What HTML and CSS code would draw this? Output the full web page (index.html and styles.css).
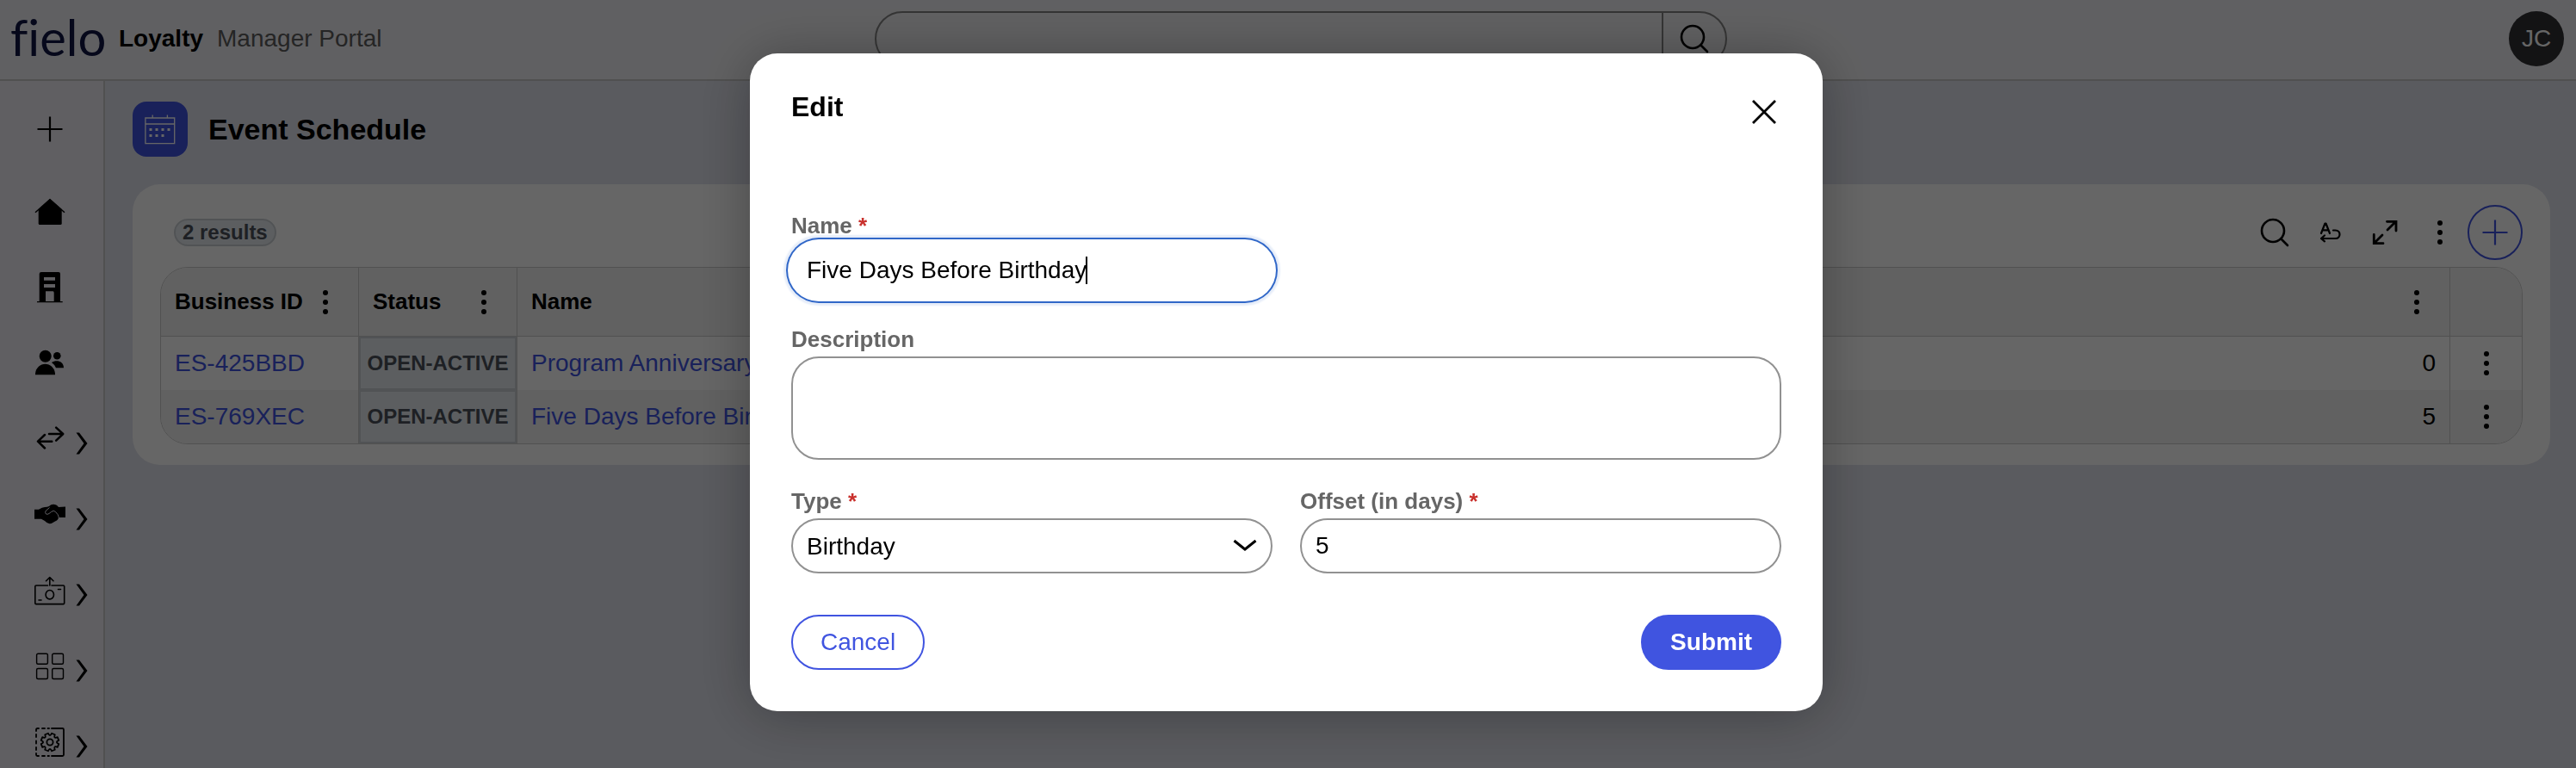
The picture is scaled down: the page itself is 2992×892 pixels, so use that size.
FILE: index.html
```html
<!DOCTYPE html>
<html lang="en">
<head>
<meta charset="utf-8">
<title>Event Schedule</title>
<link rel="stylesheet" href="styles.css">
</head>
<body>
<svg class="defs" aria-hidden="true">
  <symbol id="dots" viewBox="0 0 8 28"><circle cx="4" cy="3" r="3"/><circle cx="4" cy="14" r="3"/><circle cx="4" cy="25" r="3"/></symbol>
  <symbol id="chevron" viewBox="0 0 14 26"><path d="M.5 .5H4L13.500 13 4 25.500H.5L9.500 13Z"/></symbol>
  <symbol id="search" viewBox="0 0 36 36"><g fill="none" stroke="#000" stroke-width="2.600" stroke-linecap="round"><circle cx="16" cy="16" r="13"/><path d="M25.500 25.500l7.500 7.500"/></g></symbol>
  <symbol id="plus" viewBox="0 0 36 36"><path d="M18 3.500v29M3.500 18h29" fill="none" stroke="currentColor" stroke-width="2.200"/></symbol>
</svg>
<div class="app">
  <header class="topbar">
    <div class="brand">
      <span class="logo">fielo</span>
      <strong class="product">Loyalty</strong>
      <span class="portal">Manager Portal</span>
    </div>
    <form class="search">
      <input class="search-input" type="text" aria-label="Search">
      <button class="search-button" type="button" aria-label="Search"><svg class="icon"><use href="#search"/></svg></button>
    </form>
    <button class="avatar" type="button">JC</button>
  </header>
  <div class="body">
    <nav class="sidebar">
      <a class="nav-item nav-add" href="#" aria-label="New"><svg class="icon"><use href="#plus"/></svg></a>
      <a class="nav-item" href="#" aria-label="Home">
        <svg class="icon" viewBox="0 0 36 36"><path d="M18 3L31.700 15V31.500Q31.700 33 30.200 33H6.200Q4.700 33 4.700 31.500V15Z"/><path d="M1 18.700L18 3.700 35 18.700" fill="none" stroke="#000" stroke-width="1.500"/></svg>
      </a>
      <a class="nav-item" href="#" aria-label="Companies">
        <svg class="icon" viewBox="0 0 36 36"><path fill-rule="evenodd" d="M8 0H28Q30 0 30 2V34H32.700V35.300H3V34H5.700V2Q5.700 0 8 0ZM11 6V9.700H24V6ZM11 14V18H24V14ZM13 22.300V34H22.700V24Q22.700 22.300 21.500 22.300Z"/></svg>
      </a>
      <a class="nav-item" href="#" aria-label="Members">
        <svg class="icon" viewBox="0 0 36 36"><circle cx="12.700" cy="9.700" r="7"/><path d="M1 31.300V30C1.500 23 7 18.700 12.500 18.700S23.500 23 24 30V31.300Z"/><circle cx="26.300" cy="9.300" r="4.300"/><path d="M20 17C25 13.500 34 15 34 23.300H25Q23.500 19.500 20 17Z"/></svg>
      </a>
      <a class="nav-item" href="#" aria-label="Transactions">
        <svg class="icon" viewBox="0 0 36 36"><path fill="none" stroke="#000" stroke-width="2.500" stroke-linecap="round" stroke-linejoin="round" d="M17 12H33M25.200 4.700L33.200 12 25.200 19.700M20.300 20.700H4.500M12 13L4 20.700 12 28.500"/></svg>
        <svg class="chevron"><use href="#chevron"/></svg>
      </a>
      <a class="nav-item" href="#" aria-label="Partners">
        <svg class="icon" viewBox="0 0 36 36"><path d="M0 11.700H5Q9 9 12 9Q15 9 17 8Q19 5.700 22 5.700Q25.500 5.700 28 9L36 8.500V21H28Q27.500 24 24 25.500Q20 28.300 17.500 28.300Q15 28.300 12 25L8 22.700H0Z"/><path d="M17.500 9.500L13 13.500Q12 15.500 13.500 17Q15 17.800 17 16.500L19.500 14.500Q22.500 12 24.500 14.500L27 17.500Q28.300 19 28 21" fill="none" stroke="#efedf7" stroke-width="1"/></svg>
        <svg class="chevron"><use href="#chevron"/></svg>
      </a>
      <a class="nav-item" href="#" aria-label="Payouts">
        <svg class="icon" viewBox="0 0 36 36"><g fill="none" stroke="#000" stroke-width="1.600" stroke-linecap="round" stroke-linejoin="round"><path d="M15.500 12H2Q.8 12 .8 13V32.500Q.8 33.600 2 33.600H33.500Q34.700 33.600 34.700 32.500V13Q34.700 12 33.500 12H20M17.800 12V2.700M13.500 6.700L17.800 2.500 22 6.700M27.500 16.500H30.500M5 29H8"/><ellipse cx="17.800" cy="22.700" rx="4.700" ry="5.200"/></g></svg>
        <svg class="chevron"><use href="#chevron"/></svg>
      </a>
      <a class="nav-item" href="#" aria-label="Catalog">
        <svg class="icon" viewBox="0 0 36 36"><g fill="none" stroke="#000" stroke-width="1.400"><rect x="2.600" y="3.300" width="12.800" height="12" rx="1.500"/><rect x="20.700" y="3.300" width="12.800" height="12" rx="1.500"/><rect x="2.600" y="20.500" width="12.800" height="12" rx="1.500"/><rect x="20.700" y="20.500" width="12.800" height="12" rx="1.500"/></g></svg>
        <svg class="chevron"><use href="#chevron"/></svg>
      </a>
      <a class="nav-item" href="#" aria-label="Settings">
        <svg class="icon" viewBox="0 0 36 36"><g fill="none" stroke="#000" stroke-width="1.800" stroke-linecap="round" stroke-linejoin="round"><path d="M20 2H32.500Q34 2 34 3.500V32.500Q34 34 32.500 34H20M15.500 2H17M9 2H12M5 2H3.500Q2 2 2 3.500V5M2 9V12M2 16.500V19.500M2 24V27M2 31V32.500Q2 34 3.500 34H5M9 34H12M15.500 34H17"/><circle cx="18" cy="18" r="3.600"/><path transform="translate(18 18) rotate(22.500)" d="M10.300 -2V2Q5 2.100 8.700 5.870L5.870 8.700Q2.100 5 2 10.300H-2Q-2.100 5 -5.870 8.700L-8.700 5.870Q-5 2.100 -10.300 2V-2Q-5 -2.100 -8.700 -5.870L-5.870 -8.700Q-2.100 -5 -2 -10.300H2Q2.100 -5 5.870 -8.700L8.700 -5.870Q5 -2.100 10.300 -2Z"/></g></svg>
        <svg class="chevron"><use href="#chevron"/></svg>
      </a>
    </nav>
    <main class="main">
      <div class="page-title">
        <span class="tile"><svg class="icon" viewBox="0 0 36 36"><path fill="none" stroke="#fff" stroke-width="1.300" d="M.9 5H34.700V34.700H.9ZM.9 12H34.700M9.200 5V1.500M26.400 5V1.500"/><path fill="#fff" d="M5.500 17h3v3h-3zM12.500 17h3v3h-3zM19.500 17h3v3h-3zM26.500 17h3v3h-3zM5.500 24h3v3h-3zM12.500 24h3v3h-3zM19.500 24h3v3h-3z"/></svg></span>
        <h1 class="heading">Event Schedule</h1>
      </div>
      <section class="card">
        <div class="toolbar">
          <span class="count">2 results</span>
          <div class="tools">
            <button class="tool" type="button" aria-label="Search records"><svg class="icon"><use href="#search"/></svg></button>
            <button class="tool" type="button" aria-label="Wrap text"><svg class="icon" viewBox="0 0 36 36"><g fill="none" stroke="#000" stroke-width="2.200" stroke-linecap="round" stroke-linejoin="round"><path d="M8 19L12.500 7.500H13.500L18 19M9.500 15.300H16.500M22 15.500H24.500C28 15.500 29.500 18 29.500 20.300S28 25 24.500 25H8.500M12 21.500L8 25 12 28.300"/></g></svg></button>
            <button class="tool" type="button" aria-label="Expand"><svg class="icon" viewBox="0 0 36 36"><g fill="none" stroke="#000" stroke-width="2.800" stroke-linecap="round"><path d="M21 15L30 6M20.500 5.300H31V16M15 21L6 30M5.300 20.500V30.700H16"/></g></svg></button>
            <button class="tool" type="button" aria-label="More"><svg class="dots"><use href="#dots"/></svg></button>
            <button class="tool tool-add" type="button" aria-label="Add"><svg class="icon"><use href="#plus"/></svg></button>
          </div>
        </div>
        <div class="table-frame">
          <table class="table">
            <thead>
              <tr>
                <th class="col-id"><span class="th-inner">Business ID <button class="menu" type="button" aria-label="Business ID menu"><svg class="dots"><use href="#dots"/></svg></button></span></th>
                <th class="col-status"><span class="th-inner">Status <button class="menu" type="button" aria-label="Status menu"><svg class="dots"><use href="#dots"/></svg></button></span></th>
                <th class="col-name">Name</th>
                <th class="col-offset"><span class="th-inner th-end"><button class="menu" type="button" aria-label="Column menu"><svg class="dots"><use href="#dots"/></svg></button></span></th>
                <th class="col-actions"></th>
              </tr>
            </thead>
            <tbody>
              <tr>
                <td><a class="link" href="#">ES-425BBD</a></td>
                <td class="status"><span class="status-tag">OPEN-ACTIVE</span></td>
                <td><a class="link" href="#">Program Anniversary</a></td>
                <td class="number">0</td>
                <td class="actions"><button class="menu" type="button" aria-label="Row menu"><svg class="dots"><use href="#dots"/></svg></button></td>
              </tr>
              <tr>
                <td><a class="link" href="#">ES-769XEC</a></td>
                <td class="status"><span class="status-tag">OPEN-ACTIVE</span></td>
                <td><a class="link" href="#">Five Days Before Birthday</a></td>
                <td class="number">5</td>
                <td class="actions"><button class="menu" type="button" aria-label="Row menu"><svg class="dots"><use href="#dots"/></svg></button></td>
              </tr>
            </tbody>
          </table>
        </div>
      </section>
    </main>
  </div>
</div>
<div class="overlay">
  <form class="modal" role="dialog" aria-labelledby="modal-title">
    <div class="modal-head">
      <h2 class="modal-title" id="modal-title">Edit</h2>
      <button class="close" type="button" aria-label="Close"><svg class="icon" viewBox="0 0 36 36"><path d="M5 5L31 31M31 5L5 31" fill="none" stroke="#000" stroke-width="2.800"/></svg></button>
    </div>
    <div class="fields">
      <div class="field">
        <label class="label" for="name">Name <span class="required">*</span></label>
        <div class="control-wrap">
          <input class="control is-focused" id="name" type="text" value="Five Days Before Birthday">
          <span class="caret"></span>
        </div>
      </div>
      <div class="field field-wide">
        <label class="label" for="description">Description</label>
        <textarea class="control control-area" id="description"></textarea>
      </div>
      <div class="field">
        <label class="label" for="type">Type <span class="required">*</span></label>
        <div class="control-wrap">
          <select class="control" id="type"><option>Birthday</option></select>
          <svg class="select-arrow" viewBox="0 0 28 16"><path d="M1.500 2L14 12 26.500 2" fill="none" stroke="#000" stroke-width="3"/></svg>
        </div>
      </div>
      <div class="field">
        <label class="label" for="offset">Offset (in days) <span class="required">*</span></label>
        <input class="control" id="offset" type="text" value="5">
      </div>
    </div>
    <div class="modal-foot">
      <button class="button" type="button">Cancel</button>
      <button class="button button-primary" type="submit">Submit</button>
    </div>
  </form>
</div>
</body>
</html>
```
FILE: styles.css
```css
* { box-sizing: border-box; }
body {
  margin: 0;
  background: #e1e3ed;
  color: #000;
  font-family: "Liberation Sans", Arial, sans-serif;
  font-size: 28px;
}
button, input, select, textarea { font: inherit; color: inherit; }
button { padding: 0; border: 0; background: none; }
a { color: inherit; text-decoration: none; }
.defs { position: absolute; width: 0; height: 0; }
.icon { display: block; width: 36px; height: 36px; flex: none; }
.dots { display: block; width: 8px; height: 28px; flex: none; }

.app { display: flex; flex-direction: column; height: 100vh; overflow: hidden; }
.topbar {
  display: grid;
  grid-template-columns: 1fr minmax(0, 1022px) 1fr;
  align-items: center;
  flex: none;
  height: 94px;
  padding: 0 14px 2px 12px;
  border-bottom: 2px solid #c8c8c8;
  background: #f1f1f4;
}
.brand { display: flex; align-items: center; white-space: nowrap; }
.logo {
  width: 126px;
  padding-bottom: 4px;
  color: #0f1645;
  font-family: Lato, sans-serif;
  font-size: 58px;
  font-variant-ligatures: none;
  line-height: 60px;
}
.product { margin-right: 16px; }
.portal { color: #5c5c5c; }
.search {
  display: flex;
  height: 64px;
  margin-left: 32px;
  border: 2px solid #858585;
  border-radius: 32px;
  overflow: hidden;
}
.search-input { flex: 1; min-width: 0; border: 0; background: transparent; padding: 0 24px; }
.search-button {
  display: flex;
  align-items: center;
  justify-content: center;
  width: 74px;
  border-left: 2px solid #858585;
}
.avatar {
  justify-self: end;
  width: 64px;
  height: 64px;
  border-radius: 50%;
  background: #303034;
  color: #fff;
}

.body { display: flex; flex: 1; min-height: 0; }
.sidebar {
  flex: none;
  width: 122px;
  padding-top: 12px;
  border-right: 2px solid #cbcbcb;
  background: #efedf5;
  overflow: hidden;
}
.nav-item { display: flex; align-items: center; gap: 12px; height: 88px; padding-left: 40px; }
.nav-add { margin-bottom: 8px; }
.chevron { width: 14px; height: 26px; margin-top: 10px; }

.main { flex: 1; min-width: 0; padding: 24px 30px 0 32px; }
.page-title { display: flex; align-items: center; gap: 24px; margin-bottom: 32px; }
.tile {
  display: flex;
  align-items: center;
  justify-content: center;
  width: 64px;
  height: 64px;
  border-radius: 16px;
  background: #4054e0;
}
.heading { margin: 0; font-size: 34px; line-height: 40px; }
.card { padding: 24px 32px; border-radius: 32px; background: #fff; }
.toolbar { display: flex; align-items: center; justify-content: space-between; margin-bottom: 8px; }
.count {
  margin-left: 16px;
  padding: 0 8px;
  border: 2px solid #cbd0d5;
  border-radius: 16px;
  background: #e6ebf0;
  color: #4b525a;
  font-size: 24px;
  font-weight: bold;
  line-height: 28px;
}
.tools { display: flex; }
.tool { display: flex; align-items: center; justify-content: center; width: 64px; height: 64px; }
.tool-add { border: 2px solid #4054e0; border-radius: 50%; color: #4054e0; }

.table-frame { border: 1px solid #cacaca; border-radius: 32px; overflow: hidden; }
.table { width: 100%; table-layout: fixed; border-collapse: separate; border-spacing: 0; }
.table th, .table td { padding: 0 16px; border-right: 1px solid #cacaca; text-align: left; white-space: nowrap; }
.table th:last-child, .table td:last-child { border-right: 0; }
.table th { height: 80px; border-bottom: 1px solid #cacaca; background: #f3f3f3; font-size: 26px; }
.table td { height: 62px; }
.table tbody tr:nth-child(even) { background: #f3f3f3; }
.col-id { width: 230px; }
.col-status { width: 184px; }
.col-name { width: 800px; }
.col-actions { width: 83px; }
.th-inner { display: flex; align-items: center; justify-content: space-between; padding-right: 18px; }
.th-end { justify-content: flex-end; }
.menu { display: flex; align-items: center; justify-content: center; }
.link { color: #4054e0; }
.table td.status { padding: 0; }
.status-tag {
  display: flex;
  align-items: center;
  justify-content: center;
  height: 62px;
  border: 2px solid #cbd0d5;
  background: #e6ebf0;
  color: #4b525a;
  font-size: 24px;
  font-weight: bold;
}
.table td.number { text-align: right; }
.actions .menu { width: 100%; }

.overlay {
  position: fixed;
  inset: 0;
  display: flex;
  align-items: center;
  justify-content: center;
  padding: 0 4px 4px 0;
  background: rgba(0, 0, 0, .6);
}
.modal {
  width: 1246px;
  max-width: 100%;
  padding: 48px;
  border-radius: 32px;
  background: #fff;
  box-shadow: 0 4px 64px rgba(0, 0, 0, .3);
}
.modal-head { display: flex; justify-content: space-between; margin-bottom: 96px; }
.modal-title { margin: 0; font-size: 32px; line-height: 28px; }
.close { display: flex; align-items: center; justify-content: center; width: 40px; height: 40px; }
.fields { display: grid; grid-template-columns: 1fr 1fr; gap: 32px; }
.field { display: flex; flex-direction: column; }
.field-wide { grid-column: 1 / -1; }
.label { padding-bottom: 4px; color: #666; font-size: 26px; font-weight: bold; line-height: 32px; }
.required { color: #c9302c; }
.control-wrap { position: relative; display: flex; }
.control {
  width: 100%;
  height: 64px;
  padding: 0 16px;
  border: 2px solid #919191;
  border-radius: 32px;
  outline: 0;
  background: #fff;
  color: #000;
  appearance: none;
}
.control-area { display: block; height: 120px; resize: none; }
.control.is-focused {
  border-color: #fff;
  box-shadow: 0 0 0 4px #fff, 0 0 0 6px #3067c8, 0 0 2px 9px #e6edf9;
}
.caret { position: absolute; left: 342px; top: 16px; width: 2px; height: 32px; background: #000; }
.select-arrow { position: absolute; right: 18px; top: 24px; width: 28px; height: 16px; pointer-events: none; }
.modal-foot { display: flex; justify-content: space-between; margin-top: 48px; }
.button {
  height: 64px;
  padding: 0 32px;
  border: 2px solid #4054e0;
  border-radius: 32px;
  color: #4054e0;
}
.button-primary { background: #4054e0; color: #fff; font-weight: bold; }
```
